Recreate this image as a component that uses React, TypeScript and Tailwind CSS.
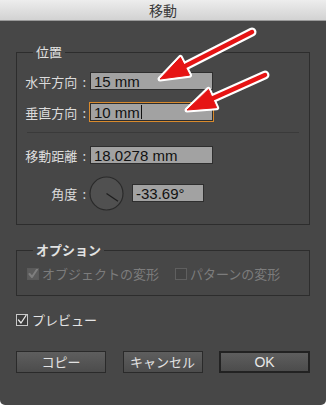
import React from "react";

const jp = { fontFamily: '"Noto Sans CJK JP", "Noto Sans", sans-serif' };
const lat = { fontFamily: '"Liberation Sans", Arial, sans-serif' };

function Field({ value, w, focus, cursor }: { value: string; w: string; focus?: boolean; cursor?: boolean }) {
  return (
    <div
      className={`${w} h-[18px] bg-[#a2a2a2] border border-[#2e2e2e] flex items-center pl-[3px] text-[15px] leading-none text-[#111] ${focus ? "outline outline-1 outline-[#d98a2c]" : ""}`}
      style={lat}
    >
      <span>{value}</span>
      {cursor && <span className="ml-[1px] w-[1px] h-[14px] bg-[#111]" />}
    </div>
  );
}

function Label({ children }: { children: React.ReactNode }) {
  return (
    <div className="w-[60px] flex justify-end items-center text-[13px] leading-none text-[#dcdcdc] whitespace-nowrap" style={jp}>
      <span>{children}</span>
      <span className="ml-[5px] pr-[1px]">:</span>
    </div>
  );
}

function Check({ kind }: { kind: "dis-on" | "dis-off" | "on" }) {
  if (kind === "dis-off")
    return <span className="w-[12px] h-[12px] border border-[#5f5f5f] bg-[#434343] shrink-0" />;
  const dis = kind === "dis-on";
  return (
    <span
      className={`w-[12px] h-[12px] border shrink-0 flex items-center justify-center ${dis ? "border-[#5a5a5a] bg-[#5c5c5c]" : "border-[#c8c8c8] bg-[#3c3c3c]"}`}
    >
      <svg width="10" height="10" viewBox="0 0 10 10">
        <path
          d="M1.5 5 L4 8 L9 0.5"
          fill="none"
          stroke={dis ? "#7e7e7e" : "#e8e8e8"}
          strokeWidth={dis ? 2 : 1.3}
          strokeLinecap="round"
          strokeLinejoin="round"
        />
      </svg>
    </span>
  );
}

function Arrow({ tail, tip }: { tail: [number, number]; tip: [number, number] }) {
  const dx = tip[0] - tail[0];
  const dy = tip[1] - tail[1];
  const len = Math.hypot(dx, dy);
  const ux = dx / len;
  const uy = dy / len;
  const nx = -uy;
  const ny = ux;
  const hl = 28;
  const hw = 10;
  const bx = tip[0] - hl * ux;
  const by = tip[1] - hl * uy;
  const pts = `${tip[0]},${tip[1]} ${bx + hw * nx},${by + hw * ny} ${bx - hw * nx},${by - hw * ny}`;
  const sx = bx + 4 * ux;
  const sy = by + 4 * uy;
  return (
    <g>
      <line x1={tail[0]} y1={tail[1]} x2={sx} y2={sy} stroke="#fff" strokeWidth={9} strokeLinecap="round" />
      <polygon points={pts} fill="#fff" stroke="#fff" strokeWidth={5} strokeLinejoin="round" />
      <line x1={tail[0]} y1={tail[1]} x2={sx} y2={sy} stroke="#e61414" strokeWidth={4.5} strokeLinecap="round" />
      <polygon points={pts} fill="#e61414" stroke="#e61414" strokeWidth={1} strokeLinejoin="round" />
    </g>
  );
}

export default function App() {
  return (
    <div className="w-[326px] h-[405px] bg-white">
      <div className="relative w-[326px] h-[405px] bg-[#474747] rounded-b-[5px] overflow-hidden flex flex-col">
        <div
          className="h-[21px] shrink-0 bg-gradient-to-b from-[#ededed] to-[#d2d2d2] border-b border-[#9a9a9a] flex items-center justify-center text-[14px] text-[#3a3a3a]"
          style={jp}
        >
          移動
        </div>
        <div className="px-[16px] pt-[22px] flex flex-col">
          <fieldset className="border border-[#2d2d2d] pl-[10px] pt-[11px] pb-[14px]">
            <legend className="ml-[6px] px-[3px] text-[13px] leading-[18px] text-[#e2e2e2]" style={jp}>
              位置
            </legend>
            <div className="flex items-center h-[18px] gap-[3px]">
              <Label>水平方向</Label>
              <Field value="15 mm" w="w-[123px]" />
            </div>
            <div className="flex items-center h-[18px] gap-[3px] mt-[13px]">
              <Label>垂直方向</Label>
              <Field value="10 mm" w="w-[123px]" focus cursor />
            </div>
            <div className="h-[1px] bg-[#3a3a3a] mt-[11px] mr-[10px]" />
            <div className="flex items-center h-[18px] gap-[3px] mt-[13px]">
              <Label>移動距離</Label>
              <Field value="18.0278 mm" w="w-[123px]" />
            </div>
            <div className="flex items-center h-[34px] gap-[2px] mt-[12px]">
              <Label>角度</Label>
              <svg width="35" height="35" viewBox="0 0 35 35" className="shrink-0">
                <circle cx="17.5" cy="17.5" r="16.5" fill="#505050" stroke="#2a2a2a" strokeWidth="1.2" />
                <line x1="17.5" y1="17.5" x2="29" y2="25.2" stroke="#1e1e1e" strokeWidth="1.3" />
              </svg>
              <div className="ml-[6px]">
                <Field value="-33.69°" w="w-[72px]" />
              </div>
            </div>
          </fieldset>

          <fieldset className="border border-[#2d2d2d] pl-[10px] pt-[7px] pb-[13px] mt-[16px]">
            <legend className="ml-[6px] px-[3px] text-[13px] leading-[18px] font-bold text-[#e2e2e2]" style={jp}>
              オプション
            </legend>
            <div className="flex items-center h-[16px] text-[13px] text-[#7c7c7c]" style={jp}>
              <Check kind="dis-on" />
              <span className="ml-[3px]">オブジェクトの変形</span>
              <span className="ml-[16px]" />
              <Check kind="dis-off" />
              <span className="ml-[3px]">パターンの変形</span>
            </div>
          </fieldset>

          <div className="flex items-center h-[16px] mt-[16px] text-[13px] text-[#e4e4e4]" style={jp}>
            <Check kind="on" />
            <span className="ml-[4px]">プレビュー</span>
          </div>

          <div className="flex justify-between mt-[23px]">
            <button
              className="w-[90px] h-[22px] border border-[#2a2a2a] bg-gradient-to-b from-[#5e5e5e] to-[#4c4c4c] text-[13px] text-[#e2e2e2] flex items-center justify-center"
              style={jp}
            >
              コピー
            </button>
            <button
              className="w-[80px] h-[22px] border border-[#2a2a2a] bg-gradient-to-b from-[#5e5e5e] to-[#4c4c4c] text-[13px] text-[#e2e2e2] flex items-center justify-center"
              style={jp}
            >
              キャンセル
            </button>
            <button
              className="w-[91px] h-[22px] border-2 border-[#222] bg-gradient-to-b from-[#5e5e5e] to-[#4c4c4c] text-[14px] text-[#e8e8e8] flex items-center justify-center"
              style={lat}
            >
              OK
            </button>
          </div>
        </div>

        <svg className="absolute left-0 top-0 pointer-events-none" width="326" height="405" viewBox="0 0 326 405">
          <Arrow tail={[252, 32]} tip={[160, 79]} />
          <Arrow tail={[265, 75]} tip={[187, 110]} />
        </svg>
      </div>
    </div>
  );
}
